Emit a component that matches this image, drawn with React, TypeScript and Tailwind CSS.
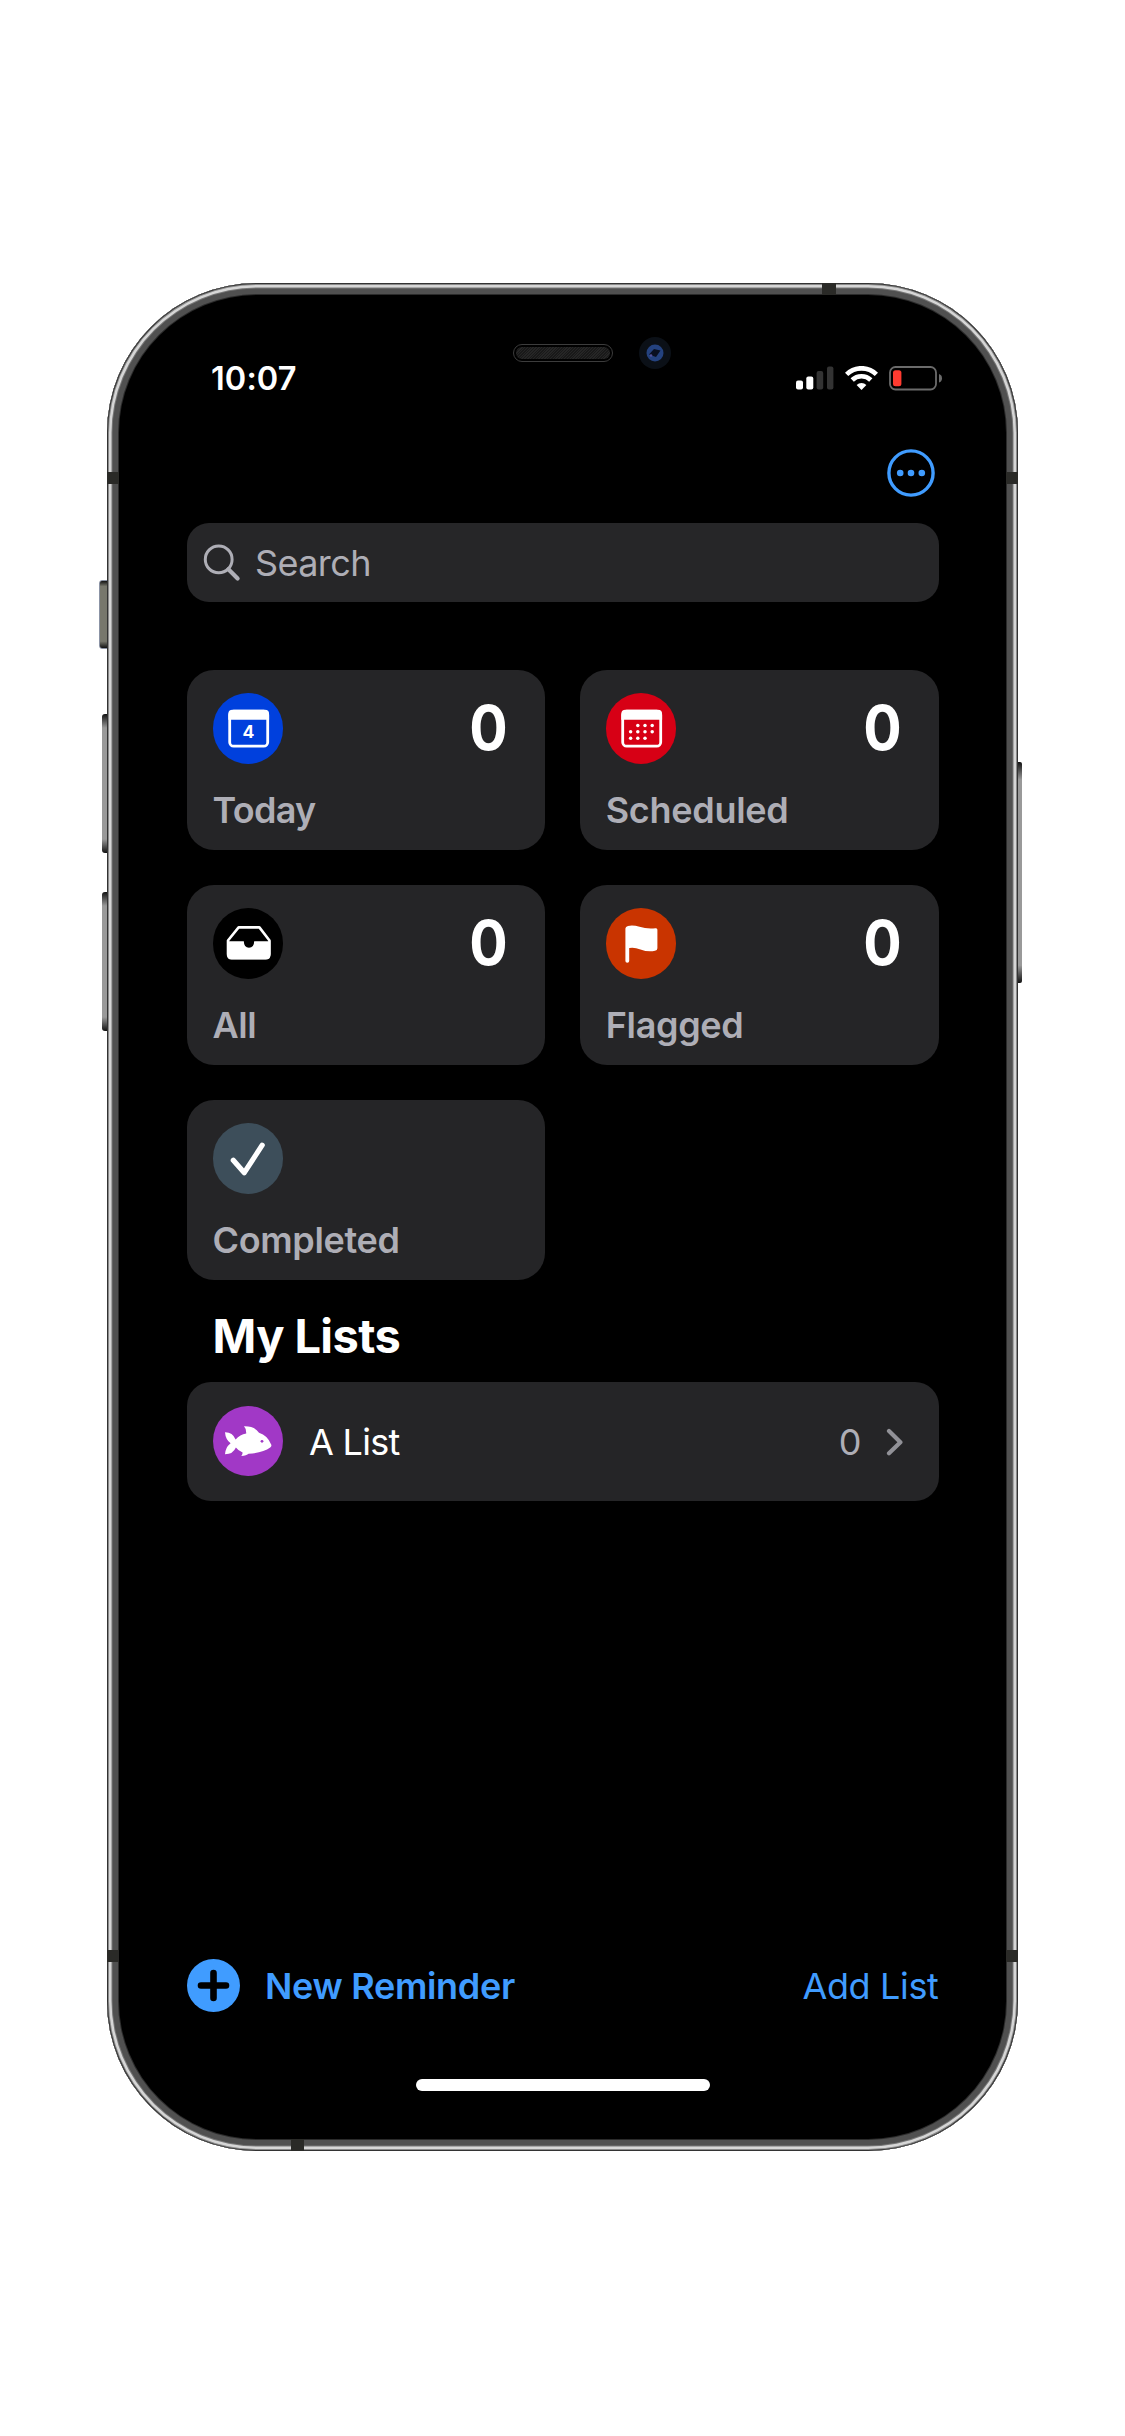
import type { ReactNode } from "react";

const FONT = "font-['Inter',sans-serif]";

function SideButton({ className }: { className: string }) {
  return <div className={`absolute ${className}`} />;
}

function Band({ className }: { className: string }) {
  return <div className={`absolute bg-[#2a2a27] ${className}`} />;
}

function Frame({ children }: { children: ReactNode }) {
  return (
    <div className="relative w-[911px] h-[1868px]">
      <SideButton className="left-[-8px] top-[297px] w-[9px] h-[69px] rounded-l-[3px] border border-[#8b93a5] bg-[linear-gradient(#111,#77776c_8%,#77776c_90%,#111)]" />
      <SideButton className="left-[-5px] top-[431px] w-[6px] h-[139px] rounded-l-[3px] bg-[linear-gradient(#111,#999_10%,#999_90%,#111)]" />
      <SideButton className="left-[-5px] top-[609px] w-[6px] h-[139px] rounded-l-[3px] bg-[linear-gradient(#111,#999_10%,#999_90%,#111)]" />
      <SideButton className="right-[-4px] top-[479px] w-[5px] h-[221px] rounded-r-[2px] bg-[linear-gradient(#111,#999_8%,#999_92%,#111)]" />
      <div className="relative h-full rounded-[150px] bg-black overflow-hidden shadow-[inset_0_0_0_1px_#333,inset_0_0_0_2px_#8a8a8a,inset_0_0_0_4.5px_#d6d6d6,inset_0_0_0_5.5px_#777,inset_0_0_0_11px_#505050,inset_0_0_0_12px_#2b2b2b]">
        {children}
      </div>
      <Band className="left-0 top-[189px] w-[12px] h-[12px]" />
      <Band className="right-0 top-[189px] w-[12px] h-[12px]" />
      <Band className="left-0 top-[1667px] w-[12px] h-[12px]" />
      <Band className="right-0 top-[1667px] w-[12px] h-[12px]" />
      <Band className="left-[715px] top-0 w-[14px] h-[12px]" />
      <Band className="left-[184px] bottom-0 w-[13px] h-[12px]" />
    </div>
  );
}

function Notch() {
  return (
    <div className="absolute left-[406px] top-[54px] flex items-center">
      <div className="w-[100px] h-[18px] rounded-full border border-[#3c3c3c] p-[2px]">
        <div className="h-full rounded-full bg-[repeating-linear-gradient(135deg,#262626_0_1px,#191919_1px_2px)]" />
      </div>
      <div className="ml-[26px] flex size-[32px] items-center justify-center rounded-full bg-[#0b1017]">
        <svg width="18" height="18" viewBox="0 0 18 18">
          <circle cx="9" cy="9" r="8.5" fill="#24427f" />
          <path d="M3 10.5 L8 5 L14.5 6.5 L10 13 Z" fill="#090f20" />
          <circle cx="5" cy="11.5" r="1.3" fill="#53509a" />
        </svg>
      </div>
    </div>
  );
}

function StatusIcons() {
  return (
    <div className="flex items-start">
      <svg width="38" height="24" viewBox="0 0 38 24">
        <rect x="0" y="14.5" width="7" height="9" rx="2" fill="#fff" />
        <rect x="10.3" y="10.5" width="7" height="13" rx="2" fill="#fff" />
        <rect x="20.6" y="5" width="6.6" height="18.5" rx="2" fill="#333" />
        <rect x="31" y="0.5" width="6.4" height="23" rx="2" fill="#333" />
      </svg>
      <svg className="ml-[11px]" width="33" height="24" viewBox="0 0 33 24">
        <g fill="none" stroke="#fff" strokeWidth="4.7">
          <path d="M1.6 8.4 A21.2 21.2 0 0 1 31.4 8.4" />
          <path d="M7.2 14 A13.4 13.4 0 0 1 25.8 14" />
        </g>
        <path d="M16.5 24 L11.6 19 A7 7 0 0 1 21.4 19 Z" fill="#fff" />
      </svg>
      <svg className="ml-[11px]" width="54" height="25" viewBox="0 0 54 25">
        <rect x="1" y="1" width="46" height="22.5" rx="5.5" fill="none" stroke="#6b6b6b" strokeWidth="1.8" />
        <rect x="4" y="4.2" width="8.4" height="16" rx="2.5" fill="#ff3b30" />
        <path d="M50 8 Q53 9 53 12.3 Q53 15.6 50 16.6 Z" fill="#6b6b6b" />
      </svg>
    </div>
  );
}

function Calendar({ children }: { children: ReactNode }) {
  return (
    <svg width="71" height="71" viewBox="0 0 71 71">
      <rect x="16.7" y="18.2" width="38" height="35" rx="4" fill="none" stroke="#fff" strokeWidth="2.8" />
      <path d="M15.3 26.8 V21 Q15.3 16.8 19.5 16.8 H51.9 Q56.1 16.8 56.1 21 V26.8 Z" fill="#fff" />
      {children}
    </svg>
  );
}

const dots = [
  [1, 0], [2, 0], [3, 0],
  [0, 1], [1, 1], [2, 1], [3, 1],
  [0, 2], [1, 2], [2, 2],
];

function TodayIcon() {
  return (
    <Calendar>
      <text x="35.4" y="45.4" textAnchor="middle" fontSize="17.5" fontWeight="700" fill="#fff" className={FONT}>
        4
      </text>
    </Calendar>
  );
}

function ScheduledIcon() {
  return (
    <Calendar>
      {dots.map(([c, r]) => (
        <circle key={`${c}-${r}`} cx={24.6 + c * 7.2} cy={32.4 + r * 6.4} r="1.75" fill="#fff" />
      ))}
    </Calendar>
  );
}

function TrayIcon() {
  return (
    <svg width="71" height="71" viewBox="0 0 71 71">
      <path
        d="M25.6 19.4 H46.4 L56.5 32.5 V46 Q56.5 50.3 52.5 50.3 H18.5 Q15 50.3 15 46 V32.5 Z"
        fill="none"
        stroke="#fff"
        strokeWidth="2.6"
        strokeLinejoin="round"
      />
      <path
        d="M14.5 33.3 H30.8 Q31 39.8 36 39.8 Q41 39.8 41.2 33.3 H57.2 V47 Q57.2 51.2 53 51.2 H18.5 Q14.3 51.2 14.3 47 Z"
        fill="#fff"
      />
    </svg>
  );
}

function FlagIcon() {
  return (
    <svg width="71" height="71" viewBox="0 0 71 71">
      <path
        d="M19.4 20.5 Q19.4 18.6 22 17.9 Q27 16.7 33.5 18.8 Q41 21.3 49.5 20.3 Q51.4 20 51.4 21.8 V40.2 Q51.4 42.3 49 42.8 Q42 44.3 34.5 41.4 Q28 38.9 23.2 40 V53 Q23.2 54.8 21.3 54.8 Q19.4 54.8 19.4 53 Z"
        fill="#fff"
      />
    </svg>
  );
}

function CheckIcon() {
  return (
    <svg width="71" height="71" viewBox="0 0 71 71">
      <path d="M20.3 37.3 L31.3 49.7 L49.2 22.2" fill="none" stroke="#fff" strokeWidth="5.2" strokeLinecap="round" strokeLinejoin="round" />
    </svg>
  );
}

function FishIcon() {
  return (
    <svg width="71" height="71" viewBox="0 0 71 71">
      <path
        d="M12 26.2 Q19.5 26 22.6 33.4 Q27 28.8 33.2 27.6 Q33.4 22.7 31 20.3 Q41.5 20 46 26.8 Q54.5 29.3 58.3 38.8 Q58.8 40.4 57.2 41.6 Q50 47 35.6 47.8 Q33.5 49.6 28.3 50 Q29.8 47.8 29.6 46.4 Q25 44.5 22.9 41.5 Q20 48.3 12 48.3 Q12.3 41.5 17.6 37.2 Q12.5 33.5 12 26.2 Z"
        fill="#fff"
      />
      <circle cx="49" cy="35.3" r="1.4" fill="#a138c6" />
    </svg>
  );
}

type CardProps = { label: string; color: string; count?: number; tracking: string; children: ReactNode };

function Card({ label, color, count, tracking, children }: CardProps) {
  return (
    <div className="h-[179.5px] rounded-[27px] bg-[#252527] pt-[23px] pl-[26px] pr-[37px]">
      <div className="flex h-[70.5px] items-center justify-between">
        <div className={`size-[70.5px] overflow-hidden rounded-full ${color}`}>{children}</div>
        {count !== undefined && (
          <span className="origin-right scale-x-[0.92] text-[62px] leading-[70px] font-bold text-white">{count}</span>
        )}
      </div>
      <div className={`mt-[24px] text-[36px] leading-[44px] font-semibold text-[#aeaeb6] ${tracking}`}>{label}</div>
    </div>
  );
}

export default function App() {
  return (
    <div className={`h-[2436px] w-[1125px] overflow-hidden bg-white pt-[283px] pl-[107px] ${FONT}`}>
      <Frame>
        <Notch />
        <div className="flex h-full flex-col px-[79.5px]">
          <header className="mt-[83px] flex h-[24px] items-start justify-between pl-[24.5px]">
            <span className="mt-px text-[32.5px] leading-[24px] font-semibold tracking-[0.1px] text-white">10:07</span>
            <div className="-mr-[4px]">
              <StatusIcons />
            </div>
          </header>

          <div className="mt-[59px] flex justify-end pr-[4px]">
            <svg width="48" height="48" viewBox="0 0 48 48">
              <circle cx="24" cy="24" r="22.1" fill="none" stroke="#409cff" strokeWidth="3.4" />
              <circle cx="13.2" cy="24" r="3.3" fill="#409cff" />
              <circle cx="24" cy="24" r="3.3" fill="#409cff" />
              <circle cx="34.8" cy="24" r="3.3" fill="#409cff" />
            </svg>
          </div>

          <div className="mt-[26px] flex h-[79px] items-center rounded-[22px] bg-[#262628] pl-[16px]">
            <svg width="39" height="39" viewBox="0 0 39 39">
              <circle cx="15.7" cy="16.4" r="13.4" fill="none" stroke="#aeaeb6" strokeWidth="3" />
              <path d="M25.4 26.2 L34.6 35.4" stroke="#aeaeb6" strokeWidth="4.2" strokeLinecap="round" />
            </svg>
            <span className="ml-[13.5px] text-[36px] leading-[44px] tracking-[-0.6px] text-[#aeaeb6]">Search</span>
          </div>

          <div className="mt-[68px] grid grid-cols-2 gap-x-[34.5px] gap-y-[35.5px]">
            <Card label="Today" color="bg-[#0040dd]" count={0} tracking="tracking-[-0.7px]">
              <TodayIcon />
            </Card>
            <Card label="Scheduled" color="bg-[#d70015]" count={0} tracking="tracking-[-0.3px]">
              <ScheduledIcon />
            </Card>
            <Card label="All" color="bg-black" count={0} tracking="tracking-[-0.4px]">
              <TrayIcon />
            </Card>
            <Card label="Flagged" color="bg-[#c93400]" count={0} tracking="tracking-[-0.35px]">
              <FlagIcon />
            </Card>
            <Card label="Completed" color="bg-[#3d4e5a]" tracking="tracking-[-0.35px]">
              <CheckIcon />
            </Card>
          </div>

          <h2 className="mt-[28px] pl-[26px] text-[47px] leading-[56px] font-bold tracking-[-0.6px] text-white">My Lists</h2>

          <div className="mt-[18.5px] flex h-[119px] items-center rounded-[24px] bg-[#252527] pl-[26px] pr-[35px]">
            <div className="-mt-px size-[70.5px] overflow-hidden rounded-full bg-[#a138c6]">
              <FishIcon />
            </div>
            <span className="ml-[26px] text-[36px] leading-[44px] tracking-[-0.7px] text-white">A List</span>
            <span className="ml-auto text-[36px] leading-[44px] text-[#aeaeb6]">0</span>
            <svg className="ml-[24px]" width="18" height="28" viewBox="0 0 18 28">
              <path d="M3 3 L14.4 14.2 L3 25.2" fill="none" stroke="#919197" strokeWidth="4.2" strokeLinecap="round" strokeLinejoin="round" />
            </svg>
          </div>

          <footer className="mt-[458px] flex h-[53px] items-center">
            <svg width="53" height="53" viewBox="0 0 53 53">
              <circle cx="26.5" cy="26.5" r="26.5" fill="#409cff" />
              <path d="M26.5 14 V39 M14 26.5 H39" stroke="#000" strokeWidth="6.6" strokeLinecap="round" />
            </svg>
            <span className="ml-[25.5px] text-[36px] leading-[44px] font-semibold tracking-[-0.3px] text-[#409cff]">New Reminder</span>
            <span className="ml-auto text-[36px] leading-[44px] tracking-[-0.35px] text-[#409cff]">Add List</span>
          </footer>

          <div className="mt-[67px] h-[12px] w-[294px] self-center rounded-full bg-white" />
        </div>
      </Frame>
    </div>
  );
}
